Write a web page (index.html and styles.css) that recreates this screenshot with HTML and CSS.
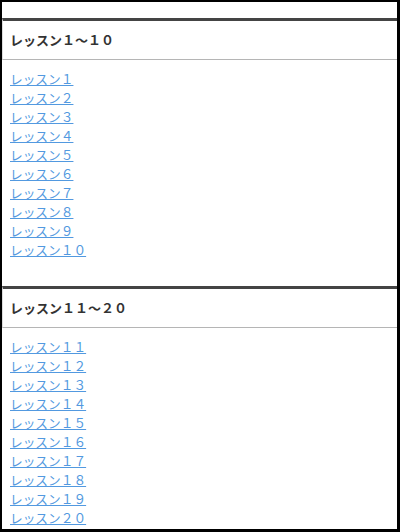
FILE: index.html
```html
<!DOCTYPE html>
<html lang="ja">
<head>
<meta charset="utf-8">
<link rel="stylesheet" href="styles.css">
</head>
<body>
<div class="frame">
  <section class="panel">
    <h2 class="panel-head">レッスン１～１０</h2>
    <ul class="links">
      <li><a href="#">レッスン１</a></li>
      <li><a href="#">レッスン２</a></li>
      <li><a href="#">レッスン３</a></li>
      <li><a href="#">レッスン４</a></li>
      <li><a href="#">レッスン５</a></li>
      <li><a href="#">レッスン６</a></li>
      <li><a href="#">レッスン７</a></li>
      <li><a href="#">レッスン８</a></li>
      <li><a href="#">レッスン９</a></li>
      <li><a href="#">レッスン１０</a></li>
    </ul>
  </section>
  <section class="panel">
    <h2 class="panel-head">レッスン１１～２０</h2>
    <ul class="links">
      <li><a href="#">レッスン１１</a></li>
      <li><a href="#">レッスン１２</a></li>
      <li><a href="#">レッスン１３</a></li>
      <li><a href="#">レッスン１４</a></li>
      <li><a href="#">レッスン１５</a></li>
      <li><a href="#">レッスン１６</a></li>
      <li><a href="#">レッスン１７</a></li>
      <li><a href="#">レッスン１８</a></li>
      <li><a href="#">レッスン１９</a></li>
      <li><a href="#">レッスン２０</a></li>
    </ul>
  </section>
</div>
</body>
</html>
```
FILE: styles.css
```css
html, body {
  margin: 0;
  padding: 0;
  background: #fff;
}
body {
  font-family: "Noto Sans CJK JP", "Noto Sans", sans-serif;
}
.frame {
  box-sizing: border-box;
  width: 400px;
  height: 532px;
  overflow: hidden;
  border-style: solid;
  border-color: #000;
  border-width: 2px 3px 3px 2px;
  padding-top: 16px;
  background: #fff;
}
.panel {
  margin-bottom: 26px;
}
.panel-head {
  box-sizing: border-box;
  margin: 0;
  height: 42px;
  border-top: 3px solid #444;
  border-left: 1px solid #ddd;
  border-bottom: 1px solid #b5b5b5;
  padding-left: 7px;
  padding-bottom: 1px;
  display: flex;
  align-items: center;
  font-size: 13px;
  font-weight: bold;
  color: #333;
}
.links {
  list-style: none;
  margin: 0;
  padding: 9px 0 1px 8px;
}
.links li {
  height: 19px;
  line-height: 19px;
  font-size: 12.7px;
}
.links a {
  color: #5299e0;
  text-decoration: underline;
}
```
